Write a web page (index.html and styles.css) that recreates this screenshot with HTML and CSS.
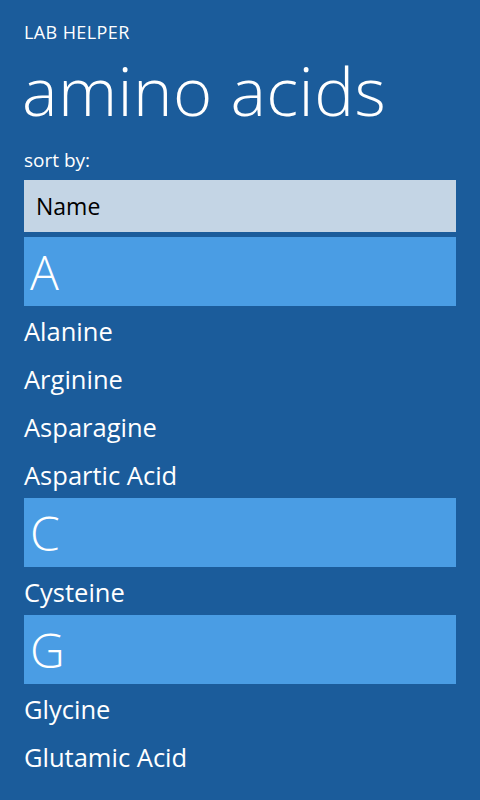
FILE: index.html
```html
<!DOCTYPE html>
<html lang="en">
<head>
<meta charset="utf-8">
<title>Lab Helper - amino acids</title>
<link rel="stylesheet" href="styles.css">
</head>
<body>
<div class="page">
  <div class="app-title">LAB HELPER</div>
  <h1 class="page-title">amino acids</h1>
  <div class="sort-label">sort by:</div>
  <div class="picker">Name</div>
  <div class="list">
    <div class="group-header">A</div>
    <div class="item">Alanine</div>
    <div class="item">Arginine</div>
    <div class="item">Asparagine</div>
    <div class="item">Aspartic Acid</div>
    <div class="group-header">C</div>
    <div class="item">Cysteine</div>
    <div class="group-header">G</div>
    <div class="item">Glycine</div>
    <div class="item">Glutamic Acid</div>
  </div>
</div>
</body>
</html>
```

FILE: styles.css
```css
html, body {
  margin: 0;
  padding: 0;
  height: 100%;
  overflow: hidden;
}

body {
  background: #1b5c9b;
  color: #ffffff;
  font-family: "Open Sans", "Noto Sans", sans-serif;
}

.page {
  padding: 20px 24px 0 24px;
}

.app-title {
  font-size: 18px;
  line-height: 24px;
  letter-spacing: 0.4px;
  font-weight: 400;
}

.page-title {
  margin: 8px 0 0 -2px;
  font-size: 67px;
  line-height: 76px;
  letter-spacing: 0.4px;
  font-weight: 300;
}

.sort-label {
  margin-top: 20px;
  font-size: 19px;
  line-height: 24px;
}

.picker {
  margin-top: 8px;
  height: 52px;
  line-height: 52px;
  padding-left: 12px;
  background: #c4d5e5;
  color: #000000;
  font-size: 23px;
}

.list {
  margin-top: 5px;
  display: flex;
  flex-direction: column;
}

.group-header {
  height: 69px;
  line-height: 69px;
  padding-left: 6px;
  background: #4a9de4;
  font-size: 48px;
  font-weight: 300;
}

.item {
  height: 48px;
  line-height: 48px;
  padding-top: 1px;
  box-sizing: border-box;
  font-size: 25.5px;
}
```
